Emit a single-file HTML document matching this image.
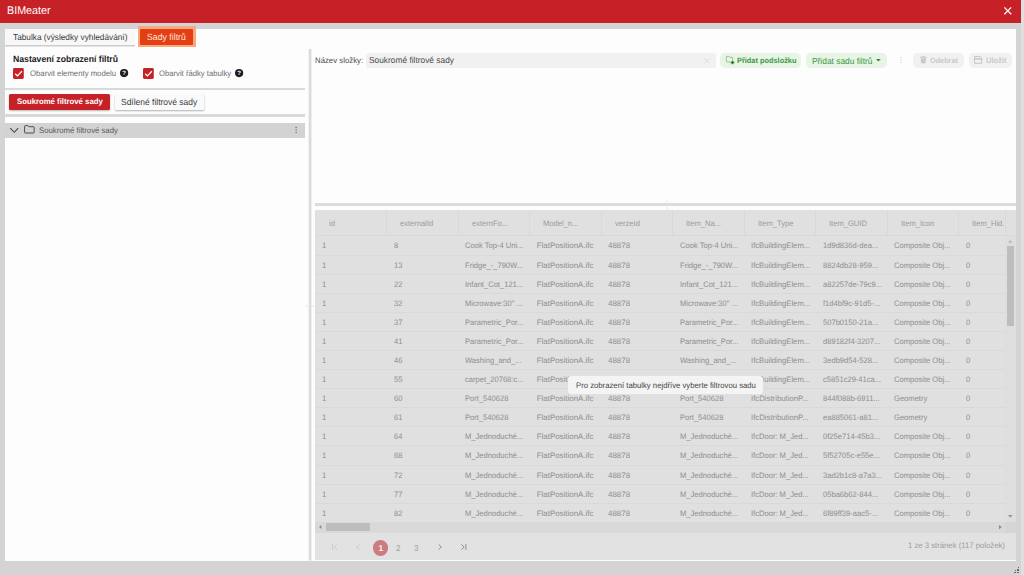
<!DOCTYPE html>
<html lang="cs"><head><meta charset="utf-8"><title>BIMeater</title>
<style>
html,body{margin:0;padding:0;}
body{width:1024px;height:575px;overflow:hidden;background:#d4d4d4;position:relative;text-rendering:geometricPrecision;font-family:"Liberation Sans", sans-serif;}
#app{position:absolute;left:0;top:0;width:1024px;height:575px;overflow:hidden;}
#app div{position:absolute;box-sizing:border-box;}
#app svg{position:absolute;overflow:visible;}
#app span.t{position:absolute;white-space:nowrap;line-height:12.0px;height:12.0px;transform-origin:0 50%;display:block;}
</style></head><body><div id="app">
<div style="left:0.00px;top:0.00px;width:1021.40px;height:22.60px;background:#c72128;"></div>
<div style="left:1021.20px;top:0.00px;width:2.80px;height:575.00px;background:#dfdfdf;"></div>
<span class="t " style="left:7.45px;top:5.00px;font-size:11.189px;color:#ffffff;transform:scaleX(0.9600);">BIMeater</span>
<svg style="left:1003.9px;top:7px" width="7.6" height="7.6" viewBox="0 0 10 10"><path d="M0.5 0.5L9.5 9.5M9.5 0.5L0.5 9.5" stroke="#fff" stroke-width="1.7" fill="none"/></svg>
<div style="left:5.00px;top:28.60px;width:1010.70px;height:532.00px;background:#fdfdfd;"></div>
<div style="left:5.00px;top:28.60px;width:130.00px;height:16.40px;background:#f8f8f8;"></div>
<div style="left:5.00px;top:45.00px;width:130.00px;height:1.00px;background:#cecece;"></div>
<div style="left:5.00px;top:46.00px;width:130.00px;height:1.00px;background:#e4e4e4;"></div>
<span class="t " style="left:13.25px;top:31.20px;font-size:8.614px;color:#3a3a3a;transform:scaleX(0.9600);">Tabulka (výsledky vyhledávání)</span>
<div style="left:137.80px;top:26.00px;width:58.20px;height:21.10px;background:#f7a980;"></div>
<div style="left:140.00px;top:28.70px;width:53.20px;height:16.60px;background:#e43f14;border-radius:1px;"></div>
<span class="t " style="left:147.10px;top:31.20px;font-size:9.107px;color:#fde6dc;transform:scaleX(0.9600);">Sady filtrů</span>
<span class="t " style="left:12.50px;top:53.40px;font-size:9.044px;color:#222222;font-weight:700;transform:scaleX(0.9600);">Nastavení zobrazení filtrů</span>
<svg style="left:13px;top:68.3px" width="10.8" height="10.9" viewBox="0 0 10.8 10.9"><rect x="0" y="0" width="10.8" height="10.9" rx="1.4" fill="#c72128"/><path d="M2.2 5.7L4.4 7.9L8.9 3.2" stroke="#fff" stroke-width="1.25" fill="none"/></svg>
<span class="t " style="left:30.25px;top:68.30px;font-size:8.073px;color:#6e6e6e;transform:scaleX(0.9600);">Obarvit elementy modelu</span>
<svg style="left:119.6px;top:69.30000000000001px" width="8.2" height="8.2" viewBox="0 0 16 16"><circle cx="8" cy="8" r="8" fill="#1d1d1d"/><text x="8" y="12.2" font-size="12" font-weight="700" text-anchor="middle" fill="#fff" font-family="Liberation Sans, sans-serif">?</text></svg>
<svg style="left:142.8px;top:68.3px" width="10.8" height="10.9" viewBox="0 0 10.8 10.9"><rect x="0" y="0" width="10.8" height="10.9" rx="1.4" fill="#c72128"/><path d="M2.2 5.7L4.4 7.9L8.9 3.2" stroke="#fff" stroke-width="1.25" fill="none"/></svg>
<span class="t " style="left:159.25px;top:68.30px;font-size:8.009px;color:#6e6e6e;transform:scaleX(0.9600);">Obarvit řádky tabulky</span>
<svg style="left:235.3px;top:69.30000000000001px" width="8.2" height="8.2" viewBox="0 0 16 16"><circle cx="8" cy="8" r="8" fill="#1d1d1d"/><text x="8" y="12.2" font-size="12" font-weight="700" text-anchor="middle" fill="#fff" font-family="Liberation Sans, sans-serif">?</text></svg>
<div style="left:5.00px;top:87.80px;width:299.80px;height:2.10px;background:#d9d9d9;"></div>
<div style="left:9.00px;top:93.60px;width:101.00px;height:16.50px;background:#c72128;border-radius:1.5px;box-shadow:0 1px 2px rgba(0,0,0,.28);"></div>
<span class="t " style="left:16.85px;top:96.40px;font-size:8.094px;color:#ffffff;font-weight:700;transform:scaleX(0.9600);">Soukromé filtrové sady</span>
<div style="left:114.60px;top:93.80px;width:89.60px;height:16.30px;background:#fafafa;border-radius:1.5px;box-shadow:0 1px 2px rgba(0,0,0,.3);"></div>
<span class="t " style="left:120.50px;top:96.30px;font-size:8.821px;color:#3a3a3a;transform:scaleX(0.9600);">Sdílené filtrové sady</span>
<div style="left:5.00px;top:114.40px;width:299.80px;height:2.20px;background:#d9d9d9;"></div>
<div style="left:5.00px;top:122.80px;width:299.80px;height:15.00px;background:#d3d3d3;"></div>
<svg style="left:10px;top:126.6px" width="8.6" height="7" viewBox="0 0 8.6 7"><path d="M0.3 1.2L4.25 5.3L8.2 1.2" stroke="#484848" stroke-width="1.1" fill="none"/></svg>
<svg style="left:23.7px;top:125.2px" width="10.8" height="8.6" viewBox="0 0 10.8 8.6"><path d="M0.6 1.4Q0.6 0.6 1.4 0.6L3.8 0.6L4.8 1.7L9.4 1.7Q10.2 1.7 10.2 2.5L10.2 7.2Q10.2 8 9.4 8L1.4 8Q0.6 8 0.6 7.2Z" stroke="#45454c" stroke-width="0.95" fill="none"/></svg>
<span class="t " style="left:38.50px;top:125.20px;font-size:8.093px;color:#5a5a5a;transform:scaleX(0.9600);">Soukromé filtrové sady</span>
<svg style="left:295px;top:126px" width="2.4" height="8" viewBox="0 0 2.4 8"><circle cx="1.1" cy="1.4" r="0.62" fill="#555"/><circle cx="1.1" cy="3.9" r="0.62" fill="#555"/><circle cx="1.1" cy="6.3" r="0.62" fill="#555"/></svg>
<svg style="left:308px;top:49px" width="4" height="512" viewBox="0 0 4 512"><rect x="0.7" y="0" width="2.75" height="511.6" fill="#dbdbdb"/></svg>
<span class="t " style="left:314.60px;top:55.10px;font-size:8.145px;color:#4a4a4a;transform:scaleX(0.9600);">Název složky:</span>
<div style="left:366.00px;top:53.30px;width:349.90px;height:14.30px;background:#f1f1f1;border-radius:3px;"></div>
<span class="t " style="left:368.50px;top:53.90px;font-size:8.715px;color:#4a4a4a;transform:scaleX(0.9600);">Soukromé filtrové sady</span>
<svg style="left:704.4px;top:57.5px" width="5.4" height="5.4" viewBox="0 0 10 10"><path d="M0.5 0.5L9.5 9.5M9.5 0.5L0.5 9.5" stroke="#cfcfcf" stroke-width="1.2" fill="none"/></svg>
<div style="left:720.20px;top:52.90px;width:81.00px;height:14.80px;background:#e7f4e6;border-radius:5px;"></div>
<svg style="left:726px;top:56.2px" width="9" height="9" viewBox="0 0 9 9"><path d="M6.6 4.1L6.6 1.8Q6.6 1.3 6.1 1.3L3.5 1.3L2.7 0.4L0.9 0.4Q0.4 0.4 0.4 0.9L0.4 5.5Q0.4 6 0.9 6L4.3 6" stroke="#7fb07f" stroke-width="0.75" fill="none"/><path d="M6.5 4.7V8.3M4.7 6.5H8.3" stroke="#1f8a1f" stroke-width="1.5" fill="none"/></svg>
<span class="t " style="left:736.50px;top:55.20px;font-size:7.697px;color:#3d9843;font-weight:700;transform:scaleX(0.9600);">Přidat podsložku</span>
<div style="left:806.30px;top:52.60px;width:81.20px;height:15.30px;background:#e7f4e6;border-radius:5px;"></div>
<span class="t " style="left:812.35px;top:54.90px;font-size:8.726px;color:#3d9843;transform:scaleX(0.9600);">Přidat sadu filtrů</span>
<svg style="left:876.2px;top:59.2px" width="4.8" height="2.6" viewBox="0 0 4.8 2.6"><path d="M0 0H4.8L2.4 2.6Z" fill="#2f8f2f"/></svg>
<svg style="left:899.5px;top:56px" width="2.4" height="8" viewBox="0 0 2.4 8"><circle cx="1.1" cy="1.8" r="0.55" fill="#bdbdbd"/><circle cx="1.1" cy="4.1" r="0.55" fill="#bdbdbd"/><circle cx="1.1" cy="6.4" r="0.55" fill="#bdbdbd"/></svg>
<div style="left:913.20px;top:52.90px;width:50.80px;height:14.80px;background:#f1f1f1;border-radius:5px;"></div>
<svg style="left:919.8px;top:56.1px" width="6.8" height="7.2" viewBox="0 0 6.8 7.4"><path d="M0 0.9H6.8V1.8H0ZM2.2 0H4.6V0.9H2.2ZM0.7 2.3H6.1L5.7 7.4H1.1Z" fill="#c9c9c9"/></svg>
<span class="t " style="left:930.25px;top:54.50px;font-size:7.582px;color:#c9c9c9;font-weight:700;transform:scaleX(0.9600);">Odebrat</span>
<div style="left:968.70px;top:52.90px;width:43.30px;height:14.80px;background:#f1f1f1;border-radius:5px;"></div>
<svg style="left:974px;top:56px" width="8.2" height="7.8" viewBox="0 0 8.2 7.8"><path d="M0.5 0.5H6.5L7.7 1.7V7.3H0.5Z" stroke="#c6c6c6" stroke-width="1" fill="none"/><path d="M0.5 2.9H7.7" stroke="#c6c6c6" stroke-width="1.5"/></svg>
<span class="t " style="left:985.50px;top:54.50px;font-size:7.852px;color:#c9c9c9;font-weight:700;transform:scaleX(0.9600);">Uložit</span>
<div style="left:315.00px;top:203.10px;width:700.70px;height:2.90px;background:#dcdcdc;"></div>
<svg style="left:666px;top:200px" width="2" height="10" viewBox="0 0 2 10"><circle cx="1" cy="1.5" r="0.5" fill="#bbb"/><circle cx="1" cy="8" r="0.5" fill="#bbb"/></svg>
<svg style="left:305px;top:304.1px" width="12" height="4" viewBox="0 0 12 4"><circle cx="1.5" cy="2" r="0.55" fill="#c4c4c4"/><circle cx="8.1" cy="2" r="0.55" fill="#c4c4c4"/></svg>
<div style="left:315.00px;top:209.90px;width:700.70px;height:350.10px;background:#e0e0e0;"></div>
<span class="t h" style="left:328.70px;top:218.20px;font-size:7.9px;color:#9b9b9b;transform:scaleX(0.9600);">id</span>
<div style="left:386.00px;top:210.70px;width:1.00px;height:25.27px;background:#d9d9d9;"></div>
<span class="t h" style="left:400.20px;top:218.20px;font-size:7.9px;color:#9b9b9b;transform:scaleX(0.9600);">externalId</span>
<div style="left:457.50px;top:210.70px;width:1.00px;height:25.27px;background:#d9d9d9;"></div>
<span class="t h" style="left:471.70px;top:218.20px;font-size:7.9px;color:#9b9b9b;transform:scaleX(0.9600);">externFo...</span>
<div style="left:529.00px;top:210.70px;width:1.00px;height:25.27px;background:#d9d9d9;"></div>
<span class="t h" style="left:543.20px;top:218.20px;font-size:7.9px;color:#9b9b9b;transform:scaleX(0.9600);">Model_n...</span>
<div style="left:600.50px;top:210.70px;width:1.00px;height:25.27px;background:#d9d9d9;"></div>
<span class="t h" style="left:614.70px;top:218.20px;font-size:7.9px;color:#9b9b9b;transform:scaleX(0.9600);">verzeId</span>
<div style="left:672.00px;top:210.70px;width:1.00px;height:25.27px;background:#d9d9d9;"></div>
<span class="t h" style="left:686.20px;top:218.20px;font-size:7.9px;color:#9b9b9b;transform:scaleX(0.9600);">Item_Na...</span>
<div style="left:743.50px;top:210.70px;width:1.00px;height:25.27px;background:#d9d9d9;"></div>
<span class="t h" style="left:757.70px;top:218.20px;font-size:7.9px;color:#9b9b9b;transform:scaleX(0.9600);">Item_Type</span>
<div style="left:815.00px;top:210.70px;width:1.00px;height:25.27px;background:#d9d9d9;"></div>
<span class="t h" style="left:829.20px;top:218.20px;font-size:7.9px;color:#9b9b9b;transform:scaleX(0.9600);">Item_GUID</span>
<div style="left:886.50px;top:210.70px;width:1.00px;height:25.27px;background:#d9d9d9;"></div>
<span class="t h" style="left:900.70px;top:218.20px;font-size:7.9px;color:#9b9b9b;transform:scaleX(0.9600);">Item_Icon</span>
<div style="left:958.00px;top:210.70px;width:1.00px;height:25.27px;background:#d9d9d9;"></div>
<span class="t h" style="left:972.20px;top:218.20px;font-size:7.9px;color:#9b9b9b;transform:scaleX(0.9600);">Item_Hid.</span>
<div style="left:1005.00px;top:210.70px;width:1.00px;height:25.27px;background:#d9d9d9;"></div>
<div style="left:315.00px;top:235.47px;width:700.70px;height:1.00px;background:#d9d9d9;"></div>
<span class="t c" style="left:322.30px;top:240.11px;font-size:7.9px;color:#8e8e8e;transform:scaleX(0.9600);">1</span>
<span class="t c" style="left:393.80px;top:240.11px;font-size:7.9px;color:#8e8e8e;transform:scaleX(0.9600);">8</span>
<span class="t c" style="left:465.30px;top:240.11px;font-size:7.9px;color:#8e8e8e;transform:scaleX(0.9600);">Cook Top-4 Uni...</span>
<span class="t c" style="left:536.80px;top:240.11px;font-size:7.9px;color:#8e8e8e;">FlatPositionA.ifc</span>
<span class="t c" style="left:608.30px;top:240.11px;font-size:7.9px;color:#8e8e8e;transform:scaleX(1.0050);">48878</span>
<span class="t c" style="left:679.80px;top:240.11px;font-size:7.9px;color:#8e8e8e;transform:scaleX(0.9600);">Cook Top-4 Uni...</span>
<span class="t c" style="left:751.30px;top:240.11px;font-size:7.9px;color:#8e8e8e;transform:scaleX(0.9700);">IfcBuildingElem...</span>
<span class="t c" style="left:822.80px;top:240.11px;font-size:7.9px;color:#8e8e8e;transform:scaleX(0.9600);">1d9d836d-dea...</span>
<span class="t c" style="left:894.30px;top:240.11px;font-size:7.9px;color:#8e8e8e;transform:scaleX(0.9600);">Composite Obj...</span>
<span class="t c" style="left:965.80px;top:240.11px;font-size:7.9px;color:#8e8e8e;transform:scaleX(0.9600);">0</span>
<div style="left:315.00px;top:254.56px;width:691.00px;height:1.00px;background:#d9d9d9;"></div>
<span class="t c" style="left:322.30px;top:260.21px;font-size:7.9px;color:#8e8e8e;transform:scaleX(0.9600);">1</span>
<span class="t c" style="left:393.80px;top:260.21px;font-size:7.9px;color:#8e8e8e;transform:scaleX(0.9600);">13</span>
<span class="t c" style="left:465.30px;top:260.21px;font-size:7.9px;color:#8e8e8e;transform:scaleX(0.9600);">Fridge_-_790W...</span>
<span class="t c" style="left:536.80px;top:260.21px;font-size:7.9px;color:#8e8e8e;">FlatPositionA.ifc</span>
<span class="t c" style="left:608.30px;top:260.21px;font-size:7.9px;color:#8e8e8e;transform:scaleX(1.0050);">48878</span>
<span class="t c" style="left:679.80px;top:260.21px;font-size:7.9px;color:#8e8e8e;transform:scaleX(0.9600);">Fridge_-_790W...</span>
<span class="t c" style="left:751.30px;top:260.21px;font-size:7.9px;color:#8e8e8e;transform:scaleX(0.9700);">IfcBuildingElem...</span>
<span class="t c" style="left:822.80px;top:260.21px;font-size:7.9px;color:#8e8e8e;transform:scaleX(0.9600);">8824db28-959...</span>
<span class="t c" style="left:894.30px;top:260.21px;font-size:7.9px;color:#8e8e8e;transform:scaleX(0.9600);">Composite Obj...</span>
<span class="t c" style="left:965.80px;top:260.21px;font-size:7.9px;color:#8e8e8e;transform:scaleX(0.9600);">0</span>
<div style="left:315.00px;top:273.65px;width:691.00px;height:1.00px;background:#d9d9d9;"></div>
<span class="t c" style="left:322.30px;top:279.30px;font-size:7.9px;color:#8e8e8e;transform:scaleX(0.9600);">1</span>
<span class="t c" style="left:393.80px;top:279.30px;font-size:7.9px;color:#8e8e8e;transform:scaleX(0.9600);">22</span>
<span class="t c" style="left:465.30px;top:279.30px;font-size:7.9px;color:#8e8e8e;transform:scaleX(0.9600);">Infant_Cot_121...</span>
<span class="t c" style="left:536.80px;top:279.30px;font-size:7.9px;color:#8e8e8e;">FlatPositionA.ifc</span>
<span class="t c" style="left:608.30px;top:279.30px;font-size:7.9px;color:#8e8e8e;transform:scaleX(1.0050);">48878</span>
<span class="t c" style="left:679.80px;top:279.30px;font-size:7.9px;color:#8e8e8e;transform:scaleX(0.9600);">Infant_Cot_121...</span>
<span class="t c" style="left:751.30px;top:279.30px;font-size:7.9px;color:#8e8e8e;transform:scaleX(0.9700);">IfcBuildingElem...</span>
<span class="t c" style="left:822.80px;top:279.30px;font-size:7.9px;color:#8e8e8e;transform:scaleX(0.9600);">a82257de-79c9...</span>
<span class="t c" style="left:894.30px;top:279.30px;font-size:7.9px;color:#8e8e8e;transform:scaleX(0.9600);">Composite Obj...</span>
<span class="t c" style="left:965.80px;top:279.30px;font-size:7.9px;color:#8e8e8e;transform:scaleX(0.9600);">0</span>
<div style="left:315.00px;top:292.74px;width:691.00px;height:1.00px;background:#d9d9d9;"></div>
<span class="t c" style="left:322.30px;top:298.39px;font-size:7.9px;color:#8e8e8e;transform:scaleX(0.9600);">1</span>
<span class="t c" style="left:393.80px;top:298.39px;font-size:7.9px;color:#8e8e8e;transform:scaleX(0.9600);">32</span>
<span class="t c" style="left:465.30px;top:298.39px;font-size:7.9px;color:#8e8e8e;transform:scaleX(0.9600);">Microwave:30&quot; ...</span>
<span class="t c" style="left:536.80px;top:298.39px;font-size:7.9px;color:#8e8e8e;">FlatPositionA.ifc</span>
<span class="t c" style="left:608.30px;top:298.39px;font-size:7.9px;color:#8e8e8e;transform:scaleX(1.0050);">48878</span>
<span class="t c" style="left:679.80px;top:298.39px;font-size:7.9px;color:#8e8e8e;transform:scaleX(0.9600);">Microwave:30&quot; ...</span>
<span class="t c" style="left:751.30px;top:298.39px;font-size:7.9px;color:#8e8e8e;transform:scaleX(0.9700);">IfcBuildingElem...</span>
<span class="t c" style="left:822.80px;top:298.39px;font-size:7.9px;color:#8e8e8e;transform:scaleX(0.9600);">f1d4bf9c-91d5-...</span>
<span class="t c" style="left:894.30px;top:298.39px;font-size:7.9px;color:#8e8e8e;transform:scaleX(0.9600);">Composite Obj...</span>
<span class="t c" style="left:965.80px;top:298.39px;font-size:7.9px;color:#8e8e8e;transform:scaleX(0.9600);">0</span>
<div style="left:315.00px;top:311.83px;width:691.00px;height:1.00px;background:#d9d9d9;"></div>
<span class="t c" style="left:322.30px;top:317.48px;font-size:7.9px;color:#8e8e8e;transform:scaleX(0.9600);">1</span>
<span class="t c" style="left:393.80px;top:317.48px;font-size:7.9px;color:#8e8e8e;transform:scaleX(0.9600);">37</span>
<span class="t c" style="left:465.30px;top:317.48px;font-size:7.9px;color:#8e8e8e;transform:scaleX(0.9600);">Parametric_Por...</span>
<span class="t c" style="left:536.80px;top:317.48px;font-size:7.9px;color:#8e8e8e;">FlatPositionA.ifc</span>
<span class="t c" style="left:608.30px;top:317.48px;font-size:7.9px;color:#8e8e8e;transform:scaleX(1.0050);">48878</span>
<span class="t c" style="left:679.80px;top:317.48px;font-size:7.9px;color:#8e8e8e;transform:scaleX(0.9600);">Parametric_Por...</span>
<span class="t c" style="left:751.30px;top:317.48px;font-size:7.9px;color:#8e8e8e;transform:scaleX(0.9700);">IfcBuildingElem...</span>
<span class="t c" style="left:822.80px;top:317.48px;font-size:7.9px;color:#8e8e8e;transform:scaleX(0.9600);">507b0150-21a...</span>
<span class="t c" style="left:894.30px;top:317.48px;font-size:7.9px;color:#8e8e8e;transform:scaleX(0.9600);">Composite Obj...</span>
<span class="t c" style="left:965.80px;top:317.48px;font-size:7.9px;color:#8e8e8e;transform:scaleX(0.9600);">0</span>
<div style="left:315.00px;top:330.92px;width:691.00px;height:1.00px;background:#d9d9d9;"></div>
<span class="t c" style="left:322.30px;top:335.57px;font-size:7.9px;color:#8e8e8e;transform:scaleX(0.9600);">1</span>
<span class="t c" style="left:393.80px;top:335.57px;font-size:7.9px;color:#8e8e8e;transform:scaleX(0.9600);">41</span>
<span class="t c" style="left:465.30px;top:335.57px;font-size:7.9px;color:#8e8e8e;transform:scaleX(0.9600);">Parametric_Por...</span>
<span class="t c" style="left:536.80px;top:335.57px;font-size:7.9px;color:#8e8e8e;">FlatPositionA.ifc</span>
<span class="t c" style="left:608.30px;top:335.57px;font-size:7.9px;color:#8e8e8e;transform:scaleX(1.0050);">48878</span>
<span class="t c" style="left:679.80px;top:335.57px;font-size:7.9px;color:#8e8e8e;transform:scaleX(0.9600);">Parametric_Por...</span>
<span class="t c" style="left:751.30px;top:335.57px;font-size:7.9px;color:#8e8e8e;transform:scaleX(0.9700);">IfcBuildingElem...</span>
<span class="t c" style="left:822.80px;top:335.57px;font-size:7.9px;color:#8e8e8e;transform:scaleX(0.9600);">d89182f4-3207...</span>
<span class="t c" style="left:894.30px;top:335.57px;font-size:7.9px;color:#8e8e8e;transform:scaleX(0.9600);">Composite Obj...</span>
<span class="t c" style="left:965.80px;top:335.57px;font-size:7.9px;color:#8e8e8e;transform:scaleX(0.9600);">0</span>
<div style="left:315.00px;top:350.01px;width:691.00px;height:1.00px;background:#d9d9d9;"></div>
<span class="t c" style="left:322.30px;top:354.66px;font-size:7.9px;color:#8e8e8e;transform:scaleX(0.9600);">1</span>
<span class="t c" style="left:393.80px;top:354.66px;font-size:7.9px;color:#8e8e8e;transform:scaleX(0.9600);">46</span>
<span class="t c" style="left:465.30px;top:354.66px;font-size:7.9px;color:#8e8e8e;transform:scaleX(0.9600);">Washing_and_...</span>
<span class="t c" style="left:536.80px;top:354.66px;font-size:7.9px;color:#8e8e8e;">FlatPositionA.ifc</span>
<span class="t c" style="left:608.30px;top:354.66px;font-size:7.9px;color:#8e8e8e;transform:scaleX(1.0050);">48878</span>
<span class="t c" style="left:679.80px;top:354.66px;font-size:7.9px;color:#8e8e8e;transform:scaleX(0.9600);">Washing_and_...</span>
<span class="t c" style="left:751.30px;top:354.66px;font-size:7.9px;color:#8e8e8e;transform:scaleX(0.9700);">IfcBuildingElem...</span>
<span class="t c" style="left:822.80px;top:354.66px;font-size:7.9px;color:#8e8e8e;transform:scaleX(0.9600);">3edb9d54-528...</span>
<span class="t c" style="left:894.30px;top:354.66px;font-size:7.9px;color:#8e8e8e;transform:scaleX(0.9600);">Composite Obj...</span>
<span class="t c" style="left:965.80px;top:354.66px;font-size:7.9px;color:#8e8e8e;transform:scaleX(0.9600);">0</span>
<div style="left:315.00px;top:369.10px;width:691.00px;height:1.00px;background:#d9d9d9;"></div>
<span class="t c" style="left:322.30px;top:373.75px;font-size:7.9px;color:#8e8e8e;transform:scaleX(0.9600);">1</span>
<span class="t c" style="left:393.80px;top:373.75px;font-size:7.9px;color:#8e8e8e;transform:scaleX(0.9600);">55</span>
<span class="t c" style="left:465.30px;top:373.75px;font-size:7.9px;color:#8e8e8e;transform:scaleX(0.9600);">carpet_20768:c...</span>
<span class="t c" style="left:536.80px;top:373.75px;font-size:7.9px;color:#8e8e8e;">FlatPositionA.ifc</span>
<span class="t c" style="left:608.30px;top:373.75px;font-size:7.9px;color:#8e8e8e;transform:scaleX(1.0050);">48878</span>
<span class="t c" style="left:679.80px;top:373.75px;font-size:7.9px;color:#8e8e8e;transform:scaleX(0.9600);">carpet_20768:c...</span>
<span class="t c" style="left:751.30px;top:373.75px;font-size:7.9px;color:#8e8e8e;transform:scaleX(0.9700);">IfcBuildingElem...</span>
<span class="t c" style="left:822.80px;top:373.75px;font-size:7.9px;color:#8e8e8e;transform:scaleX(0.9600);">c5851c29-41ca...</span>
<span class="t c" style="left:894.30px;top:373.75px;font-size:7.9px;color:#8e8e8e;transform:scaleX(0.9600);">Composite Obj...</span>
<span class="t c" style="left:965.80px;top:373.75px;font-size:7.9px;color:#8e8e8e;transform:scaleX(0.9600);">0</span>
<div style="left:315.00px;top:388.19px;width:691.00px;height:1.00px;background:#d9d9d9;"></div>
<span class="t c" style="left:322.30px;top:392.84px;font-size:7.9px;color:#8e8e8e;transform:scaleX(0.9600);">1</span>
<span class="t c" style="left:393.80px;top:392.84px;font-size:7.9px;color:#8e8e8e;transform:scaleX(0.9600);">60</span>
<span class="t c" style="left:465.30px;top:392.84px;font-size:7.9px;color:#8e8e8e;transform:scaleX(0.9600);">Port_540628</span>
<span class="t c" style="left:536.80px;top:392.84px;font-size:7.9px;color:#8e8e8e;">FlatPositionA.ifc</span>
<span class="t c" style="left:608.30px;top:392.84px;font-size:7.9px;color:#8e8e8e;transform:scaleX(1.0050);">48878</span>
<span class="t c" style="left:679.80px;top:392.84px;font-size:7.9px;color:#8e8e8e;transform:scaleX(0.9600);">Port_540628</span>
<span class="t c" style="left:751.30px;top:392.84px;font-size:7.9px;color:#8e8e8e;transform:scaleX(0.9850);">IfcDistributionP...</span>
<span class="t c" style="left:822.80px;top:392.84px;font-size:7.9px;color:#8e8e8e;transform:scaleX(0.9600);">844f088b-6911...</span>
<span class="t c" style="left:894.30px;top:392.84px;font-size:7.9px;color:#8e8e8e;transform:scaleX(0.9600);">Geometry</span>
<span class="t c" style="left:965.80px;top:392.84px;font-size:7.9px;color:#8e8e8e;transform:scaleX(0.9600);">0</span>
<div style="left:315.00px;top:407.28px;width:691.00px;height:1.00px;background:#d9d9d9;"></div>
<span class="t c" style="left:322.30px;top:411.93px;font-size:7.9px;color:#8e8e8e;transform:scaleX(0.9600);">1</span>
<span class="t c" style="left:393.80px;top:411.93px;font-size:7.9px;color:#8e8e8e;transform:scaleX(0.9600);">61</span>
<span class="t c" style="left:465.30px;top:411.93px;font-size:7.9px;color:#8e8e8e;transform:scaleX(0.9600);">Port_540628</span>
<span class="t c" style="left:536.80px;top:411.93px;font-size:7.9px;color:#8e8e8e;">FlatPositionA.ifc</span>
<span class="t c" style="left:608.30px;top:411.93px;font-size:7.9px;color:#8e8e8e;transform:scaleX(1.0050);">48878</span>
<span class="t c" style="left:679.80px;top:411.93px;font-size:7.9px;color:#8e8e8e;transform:scaleX(0.9600);">Port_540628</span>
<span class="t c" style="left:751.30px;top:411.93px;font-size:7.9px;color:#8e8e8e;transform:scaleX(0.9850);">IfcDistributionP...</span>
<span class="t c" style="left:822.80px;top:411.93px;font-size:7.9px;color:#8e8e8e;transform:scaleX(0.9600);">ea885061-a81...</span>
<span class="t c" style="left:894.30px;top:411.93px;font-size:7.9px;color:#8e8e8e;transform:scaleX(0.9600);">Geometry</span>
<span class="t c" style="left:965.80px;top:411.93px;font-size:7.9px;color:#8e8e8e;transform:scaleX(0.9600);">0</span>
<div style="left:315.00px;top:426.37px;width:691.00px;height:1.00px;background:#d9d9d9;"></div>
<span class="t c" style="left:322.30px;top:431.02px;font-size:7.9px;color:#8e8e8e;transform:scaleX(0.9600);">1</span>
<span class="t c" style="left:393.80px;top:431.02px;font-size:7.9px;color:#8e8e8e;transform:scaleX(0.9600);">64</span>
<span class="t c" style="left:465.30px;top:431.02px;font-size:7.9px;color:#8e8e8e;transform:scaleX(0.9600);">M_Jednoduché...</span>
<span class="t c" style="left:536.80px;top:431.02px;font-size:7.9px;color:#8e8e8e;">FlatPositionA.ifc</span>
<span class="t c" style="left:608.30px;top:431.02px;font-size:7.9px;color:#8e8e8e;transform:scaleX(1.0050);">48878</span>
<span class="t c" style="left:679.80px;top:431.02px;font-size:7.9px;color:#8e8e8e;transform:scaleX(0.9600);">M_Jednoduché...</span>
<span class="t c" style="left:751.30px;top:431.02px;font-size:7.9px;color:#8e8e8e;transform:scaleX(0.9600);">IfcDoor: M_Jed...</span>
<span class="t c" style="left:822.80px;top:431.02px;font-size:7.9px;color:#8e8e8e;transform:scaleX(0.9600);">0f25e714-45b3...</span>
<span class="t c" style="left:894.30px;top:431.02px;font-size:7.9px;color:#8e8e8e;transform:scaleX(0.9600);">Composite Obj...</span>
<span class="t c" style="left:965.80px;top:431.02px;font-size:7.9px;color:#8e8e8e;transform:scaleX(0.9600);">0</span>
<div style="left:315.00px;top:445.46px;width:691.00px;height:1.00px;background:#d9d9d9;"></div>
<span class="t c" style="left:322.30px;top:450.11px;font-size:7.9px;color:#8e8e8e;transform:scaleX(0.9600);">1</span>
<span class="t c" style="left:393.80px;top:450.11px;font-size:7.9px;color:#8e8e8e;transform:scaleX(0.9600);">68</span>
<span class="t c" style="left:465.30px;top:450.11px;font-size:7.9px;color:#8e8e8e;transform:scaleX(0.9600);">M_Jednoduché...</span>
<span class="t c" style="left:536.80px;top:450.11px;font-size:7.9px;color:#8e8e8e;">FlatPositionA.ifc</span>
<span class="t c" style="left:608.30px;top:450.11px;font-size:7.9px;color:#8e8e8e;transform:scaleX(1.0050);">48878</span>
<span class="t c" style="left:679.80px;top:450.11px;font-size:7.9px;color:#8e8e8e;transform:scaleX(0.9600);">M_Jednoduché...</span>
<span class="t c" style="left:751.30px;top:450.11px;font-size:7.9px;color:#8e8e8e;transform:scaleX(0.9600);">IfcDoor: M_Jed...</span>
<span class="t c" style="left:822.80px;top:450.11px;font-size:7.9px;color:#8e8e8e;transform:scaleX(0.9600);">5f52705c-e55e...</span>
<span class="t c" style="left:894.30px;top:450.11px;font-size:7.9px;color:#8e8e8e;transform:scaleX(0.9600);">Composite Obj...</span>
<span class="t c" style="left:965.80px;top:450.11px;font-size:7.9px;color:#8e8e8e;transform:scaleX(0.9600);">0</span>
<div style="left:315.00px;top:464.55px;width:691.00px;height:1.00px;background:#d9d9d9;"></div>
<span class="t c" style="left:322.30px;top:470.19px;font-size:7.9px;color:#8e8e8e;transform:scaleX(0.9600);">1</span>
<span class="t c" style="left:393.80px;top:470.19px;font-size:7.9px;color:#8e8e8e;transform:scaleX(0.9600);">72</span>
<span class="t c" style="left:465.30px;top:470.19px;font-size:7.9px;color:#8e8e8e;transform:scaleX(0.9600);">M_Jednoduché...</span>
<span class="t c" style="left:536.80px;top:470.19px;font-size:7.9px;color:#8e8e8e;">FlatPositionA.ifc</span>
<span class="t c" style="left:608.30px;top:470.19px;font-size:7.9px;color:#8e8e8e;transform:scaleX(1.0050);">48878</span>
<span class="t c" style="left:679.80px;top:470.19px;font-size:7.9px;color:#8e8e8e;transform:scaleX(0.9600);">M_Jednoduché...</span>
<span class="t c" style="left:751.30px;top:470.19px;font-size:7.9px;color:#8e8e8e;transform:scaleX(0.9600);">IfcDoor: M_Jed...</span>
<span class="t c" style="left:822.80px;top:470.19px;font-size:7.9px;color:#8e8e8e;transform:scaleX(0.9600);">3ad2b1c8-a7a3...</span>
<span class="t c" style="left:894.30px;top:470.19px;font-size:7.9px;color:#8e8e8e;transform:scaleX(0.9600);">Composite Obj...</span>
<span class="t c" style="left:965.80px;top:470.19px;font-size:7.9px;color:#8e8e8e;transform:scaleX(0.9600);">0</span>
<div style="left:315.00px;top:483.64px;width:691.00px;height:1.00px;background:#d9d9d9;"></div>
<span class="t c" style="left:322.30px;top:489.29px;font-size:7.9px;color:#8e8e8e;transform:scaleX(0.9600);">1</span>
<span class="t c" style="left:393.80px;top:489.29px;font-size:7.9px;color:#8e8e8e;transform:scaleX(0.9600);">77</span>
<span class="t c" style="left:465.30px;top:489.29px;font-size:7.9px;color:#8e8e8e;transform:scaleX(0.9600);">M_Jednoduché...</span>
<span class="t c" style="left:536.80px;top:489.29px;font-size:7.9px;color:#8e8e8e;">FlatPositionA.ifc</span>
<span class="t c" style="left:608.30px;top:489.29px;font-size:7.9px;color:#8e8e8e;transform:scaleX(1.0050);">48878</span>
<span class="t c" style="left:679.80px;top:489.29px;font-size:7.9px;color:#8e8e8e;transform:scaleX(0.9600);">M_Jednoduché...</span>
<span class="t c" style="left:751.30px;top:489.29px;font-size:7.9px;color:#8e8e8e;transform:scaleX(0.9600);">IfcDoor: M_Jed...</span>
<span class="t c" style="left:822.80px;top:489.29px;font-size:7.9px;color:#8e8e8e;transform:scaleX(0.9600);">05ba6b62-844...</span>
<span class="t c" style="left:894.30px;top:489.29px;font-size:7.9px;color:#8e8e8e;transform:scaleX(0.9600);">Composite Obj...</span>
<span class="t c" style="left:965.80px;top:489.29px;font-size:7.9px;color:#8e8e8e;transform:scaleX(0.9600);">0</span>
<div style="left:315.00px;top:502.73px;width:691.00px;height:1.00px;background:#d9d9d9;"></div>
<span class="t c" style="left:322.30px;top:508.38px;font-size:7.9px;color:#8e8e8e;transform:scaleX(0.9600);">1</span>
<span class="t c" style="left:393.80px;top:508.38px;font-size:7.9px;color:#8e8e8e;transform:scaleX(0.9600);">82</span>
<span class="t c" style="left:465.30px;top:508.38px;font-size:7.9px;color:#8e8e8e;transform:scaleX(0.9600);">M_Jednoduché...</span>
<span class="t c" style="left:536.80px;top:508.38px;font-size:7.9px;color:#8e8e8e;">FlatPositionA.ifc</span>
<span class="t c" style="left:608.30px;top:508.38px;font-size:7.9px;color:#8e8e8e;transform:scaleX(1.0050);">48878</span>
<span class="t c" style="left:679.80px;top:508.38px;font-size:7.9px;color:#8e8e8e;transform:scaleX(0.9600);">M_Jednoduché...</span>
<span class="t c" style="left:751.30px;top:508.38px;font-size:7.9px;color:#8e8e8e;transform:scaleX(0.9600);">IfcDoor: M_Jed...</span>
<span class="t c" style="left:822.80px;top:508.38px;font-size:7.9px;color:#8e8e8e;transform:scaleX(0.9600);">6f89ff39-aac5-...</span>
<span class="t c" style="left:894.30px;top:508.38px;font-size:7.9px;color:#8e8e8e;transform:scaleX(0.9600);">Composite Obj...</span>
<span class="t c" style="left:965.80px;top:508.38px;font-size:7.9px;color:#8e8e8e;transform:scaleX(0.9600);">0</span>
<div style="left:1005.40px;top:235.97px;width:10.30px;height:286.23px;background:#dedede;"></div>
<div style="left:1006.70px;top:246.20px;width:7.10px;height:79.60px;background:#bdbdbd;"></div>
<svg style="left:1008.1px;top:239.9px" width="4.6" height="2.7" viewBox="0 0 4.6 2.7"><path d="M0 2.7H4.6L2.3 0Z" fill="#b8b8b8"/></svg>
<svg style="left:1008.1px;top:515.2px" width="4.6" height="2.7" viewBox="0 0 4.6 2.7"><path d="M0 0H4.6L2.3 2.7Z" fill="#989898"/></svg>
<div style="left:315.00px;top:522.20px;width:700.70px;height:10.60px;background:#d9d9d9;"></div>
<div style="left:1005.40px;top:522.20px;width:10.30px;height:10.60px;background:#d5d5d5;"></div>
<div style="left:325.90px;top:523.00px;width:44.40px;height:7.80px;background:#bdbdbd;"></div>
<svg style="left:319.4px;top:525.2px" width="2.4" height="4" viewBox="0 0 2.4 4"><path d="M2.4 0V4L0 2Z" fill="#8a8a8a"/></svg>
<svg style="left:999px;top:524.9px" width="2.8" height="4.2" viewBox="0 0 2.8 4.2"><path d="M0 0V4.2L2.8 2.1Z" fill="#8c8c8c"/></svg>
<div style="left:315.00px;top:532.80px;width:700.70px;height:27.20px;background:#e2e2e2;"></div>
<svg style="left:331.9px;top:544.1px" width="5.4" height="6" viewBox="0 0 5.4 6"><path d="M0.5 0V6M5 0.4L2.2 3L5 5.6" stroke="#c6c6c6" stroke-width="0.9" fill="none"/></svg>
<svg style="left:356.2px;top:544.1px" width="3.6" height="6" viewBox="0 0 3.6 6"><path d="M3.2 0.4L0.6 3L3.2 5.6" stroke="#c6c6c6" stroke-width="0.9" fill="none"/></svg>
<div style="left:372.70px;top:540.20px;width:15.40px;height:15.40px;background:#cc7b81;border-radius:50%;"></div>
<span class="t " style="left:378.40px;top:542.10px;font-size:8.53px;color:#f4f4f4;font-weight:700;">1</span>
<span class="t " style="left:396.20px;top:542.10px;font-size:8.53px;color:#9c9c9c;transform:scaleX(0.9500);">2</span>
<span class="t " style="left:414.00px;top:542.10px;font-size:8.53px;color:#9c9c9c;transform:scaleX(0.9500);">3</span>
<svg style="left:438px;top:544.1px" width="4" height="6" viewBox="0 0 4 6"><path d="M0.6 0.4L3.3 3L0.6 5.6" stroke="#8f8f8f" stroke-width="1" fill="none"/></svg>
<svg style="left:460.6px;top:544.1px" width="5.4" height="6" viewBox="0 0 5.4 6"><path d="M4.9 0V6M0.4 0.4L3.2 3L0.4 5.6" stroke="#8f8f8f" stroke-width="1" fill="none"/></svg>
<span class="t " style="left:907.50px;top:539.70px;font-size:8.065px;color:#9c9c9c;transform:scaleX(0.9600);">1 ze 3 stránek (117 položek)</span>
<div style="left:568.00px;top:376.20px;width:195.00px;height:17.80px;background:#f4f4f4;border-radius:3.5px;"></div>
<span class="t " style="left:575.75px;top:380.00px;font-size:8.061px;color:#444444;transform:scaleX(0.9600);">Pro zobrazení tabulky nejdříve vyberte filtrovou sadu</span>
<div style="left:1018.40px;top:567.00px;width:1.10px;height:1.10px;background:#666666;"></div>
<div style="left:1016.80px;top:568.60px;width:1.10px;height:1.10px;background:#666666;"></div>
<div style="left:1018.40px;top:568.60px;width:1.10px;height:1.10px;background:#666666;"></div>
<div style="left:1015.20px;top:570.20px;width:1.10px;height:1.10px;background:#666666;"></div>
<div style="left:1016.80px;top:570.20px;width:1.10px;height:1.10px;background:#666666;"></div>
<div style="left:1018.40px;top:570.20px;width:1.10px;height:1.10px;background:#666666;"></div>
<div style="left:1013.60px;top:571.80px;width:1.10px;height:1.10px;background:#666666;"></div>
<div style="left:1015.20px;top:571.80px;width:1.10px;height:1.10px;background:#666666;"></div>
<div style="left:1016.80px;top:571.80px;width:1.10px;height:1.10px;background:#666666;"></div>
<div style="left:1018.40px;top:571.80px;width:1.10px;height:1.10px;background:#666666;"></div>
</div></body></html>
